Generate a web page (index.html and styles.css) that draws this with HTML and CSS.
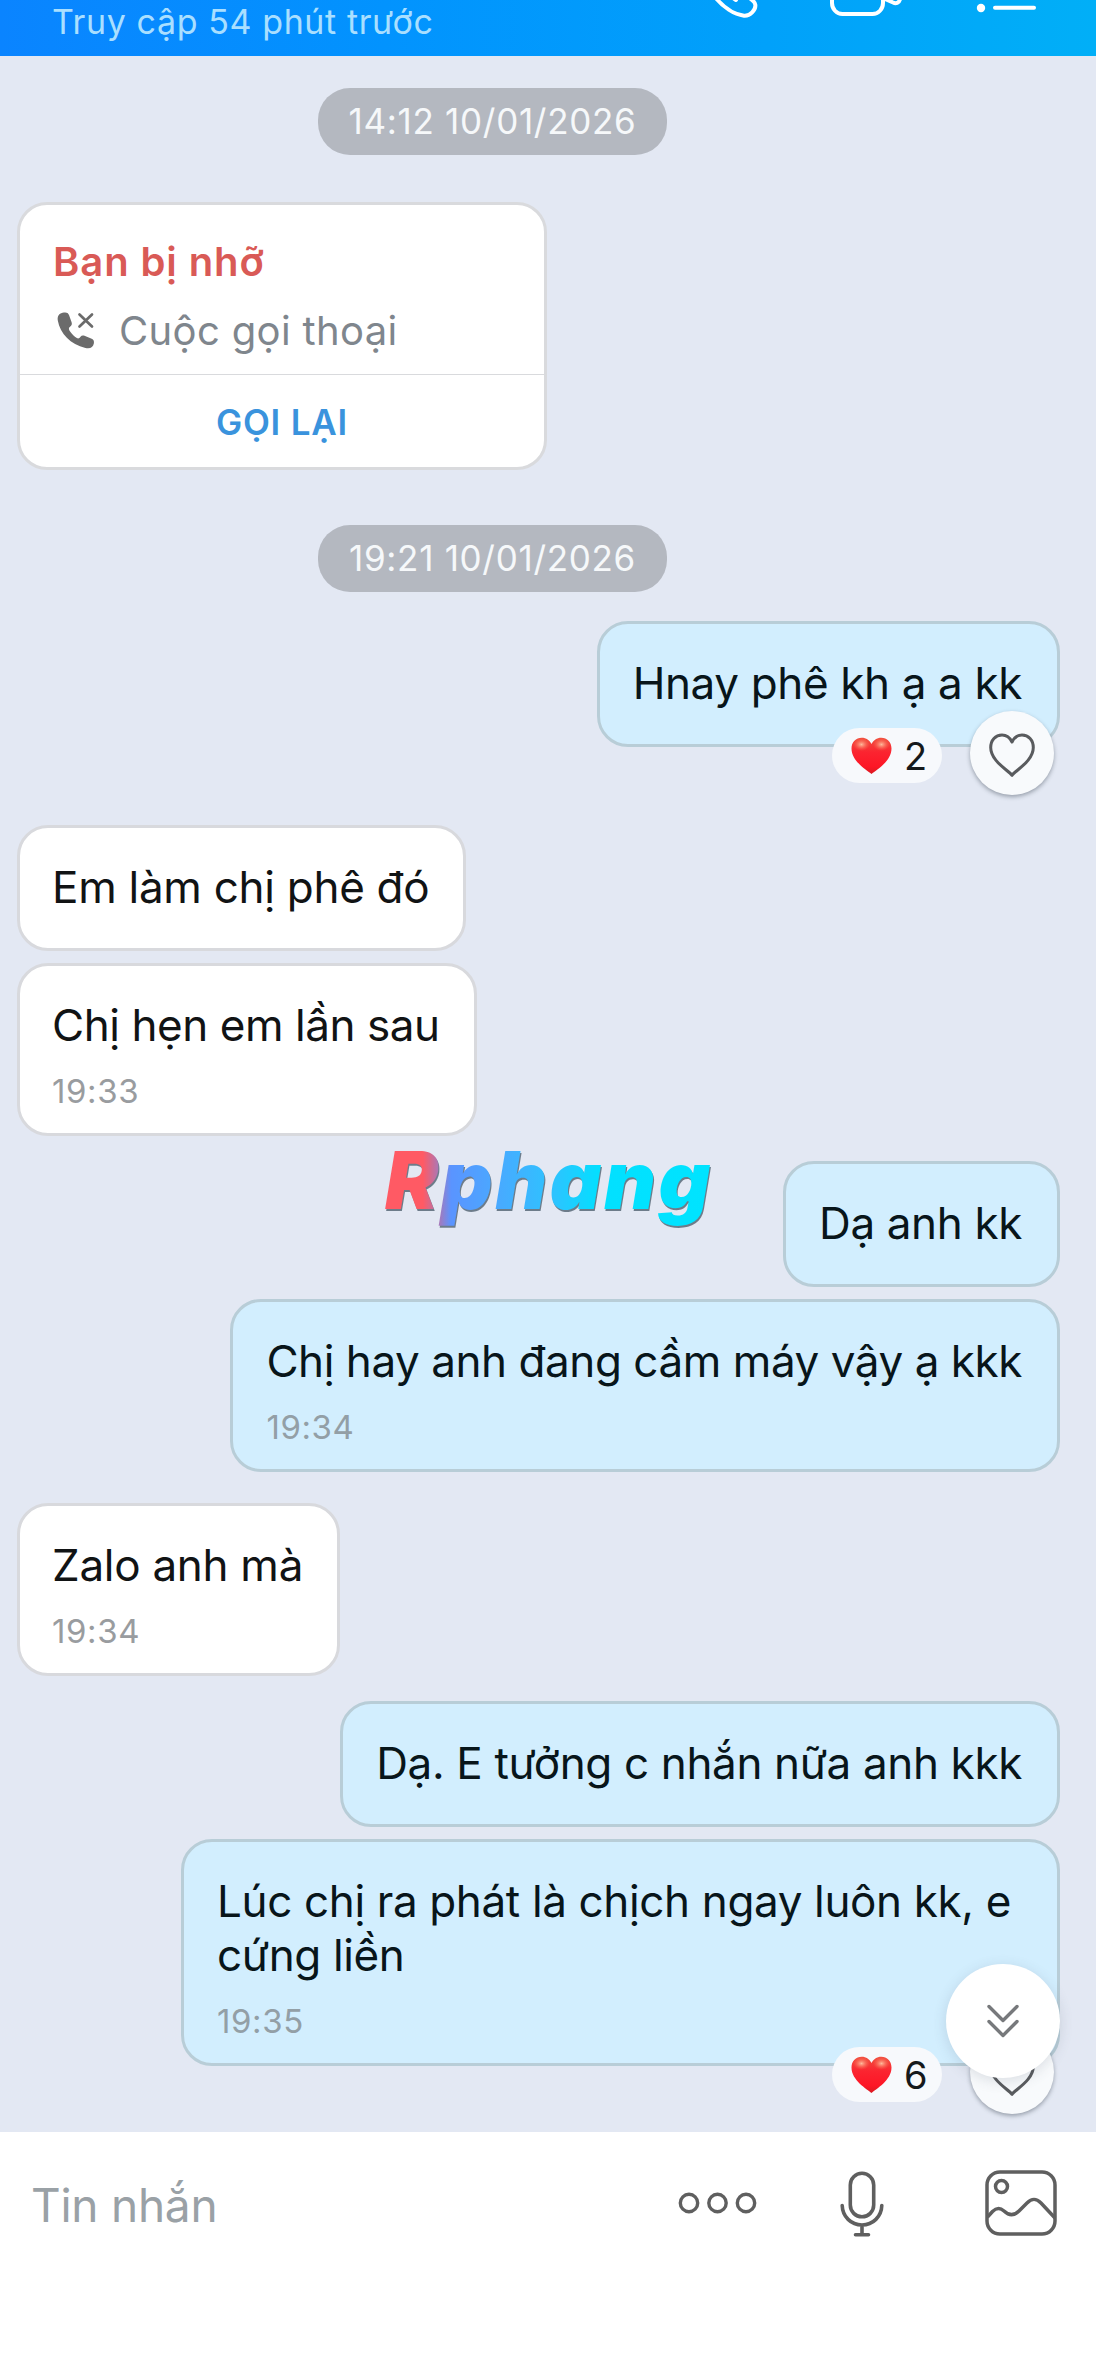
FILE: index.html
```html
<!DOCTYPE html>
<html lang="vi">
<head>
<meta charset="utf-8">
<title>Tin nhắn</title>
<link rel="stylesheet" href="styles.css">
</head>
<body>
<svg class="defs" width="0" height="0" aria-hidden="true">
  <defs>
    <radialGradient id="shine" cx="0.5" cy="0.5" r="0.5">
      <stop offset="0" stop-color="#ffc9a8" stop-opacity="0.9"/>
      <stop offset="1" stop-color="#ff6a50" stop-opacity="0"/>
    </radialGradient>
    <linearGradient id="red" x1="0" y1="0" x2="0" y2="1">
      <stop offset="0" stop-color="#f0503f"/>
      <stop offset="0.4" stop-color="#fb2430"/>
      <stop offset="0.8" stop-color="#fd1626"/>
      <stop offset="1" stop-color="#d81a20"/>
    </linearGradient>
    <symbol id="love" viewBox="0 0 41 38">
      <path d="M20.500 37C16 33 .5 24.500 .5 11.500.5 5 5 .8 10.700.8c4.500 0 8 2.600 9.800 6.200C22.300 3.400 25.800.8 30.300.8 36 .8 40.500 5 40.500 11.500 40.500 24.500 25 33 20.500 37Z" fill="url(#red)"/>
      <ellipse cx="10.500" cy="7.500" rx="8.500" ry="6.500" fill="url(#shine)"/>
      <ellipse cx="30.500" cy="7.500" rx="8.500" ry="6.500" fill="url(#shine)"/>
    </symbol>
    <symbol id="heart" viewBox="0 0 46 44">
      <path d="M23 42.300C19 37 1.700 28 1.700 14.500 1.700 7 6.500 2 13 2c4.500 0 8 2.800 10 7 2-4.200 5.500-7 10-7 6.500 0 11.300 5 11.300 12.500C44.300 28 27 37 23 42.300Z" fill="none" stroke="#595b5e" stroke-width="3" stroke-linejoin="round"/>
    </symbol>
  </defs>
</svg>

<div class="app">
  <header class="header">
    <span class="status">Truy cập 54 phút trước</span>
    <svg class="actions" width="336" height="20" viewBox="0 0 336 20" fill="none" stroke="#fff" stroke-width="4" stroke-linecap="round" stroke-linejoin="round">
      <path d="M5-3C13 7 24 14.500 34 15.700c6 .6 12-6 11.300-11C44.800 1 41-1 38-3M20-4l6 4"/>
      <path d="M122-6v9c0 6 4.500 11 10.500 11h30c6 0 10.500-5 10.500-11v-9M173-2l10 4.500c3 1.500 6 .5 7-3"/>
      <circle cx="271" cy="8" r="4.200" fill="#fff" stroke="none"/>
      <path d="M285 7.700h39"/>
    </svg>
  </header>

  <main class="chat">
    <time class="pill">14:12 10/01/2026</time>

    <section class="call">
      <div class="call-info">
        <div class="call-title">Bạn bị nhỡ</div>
        <div class="call-type">
          <svg width="38" height="38" viewBox="0 0 38 38">
            <path d="M5.500.8C9 0 11 .4 12 3l2.500 7c.7 2 .4 3.200-1.200 4.400-2 1.500-1.700 2.800 0 5.400 1.700 2.600 4 4.700 6.500 6.200 1.500.9 2.500.4 3.700-1.200 1-1.400 2.300-1.700 4-1l6.600 2.700c2.400 1 3.200 2.300 2.800 4.800-.8 4.200-3.800 5.800-8.500 4.700C13.500 32.500 3 21.500.8 8.500.2 4.500 1.700 1.700 5.500.8Z" fill="#6b6b6b"/>
            <path d="M22.500 2.500l12.500 12M35 2.500l-12.500 12" stroke="#6b6b6b" stroke-width="2.700" stroke-linecap="round"/>
          </svg>
          <span>Cuộc gọi thoại</span>
        </div>
      </div>
      <div class="call-back">GỌI LẠI</div>
    </section>

    <time class="pill pill-second">19:21 10/01/2026</time>

    <div class="msg sent gap-day">
      <p>Hnay phê kh ạ a kk</p>
      <div class="reactions">
        <span class="count"><svg width="41" height="38"><use href="#love"/></svg>2</span>
        <span class="like"><svg width="46" height="44"><use href="#heart"/></svg></span>
      </div>
    </div>

    <div class="msg received gap-reacted"><p>Em làm chị phê đó</p></div>
    <div class="msg received timed gap-same snug"><p>Chị hẹn em lần sau</p><time>19:33</time></div>

    <div class="msg sent gap-turn"><p>Dạ anh kk</p></div>
    <div class="msg sent timed gap-same snug"><p>Chị hay anh đang cầm máy vậy ạ kkk</p><time>19:34</time></div>

    <div class="msg received timed gap-wide"><p>Zalo anh mà</p><time>19:34</time></div>

    <div class="msg sent gap-turn"><p>Dạ. E tưởng c nhắn nữa anh kkk</p></div>
    <div class="msg sent timed gap-same long">
      <p>Lúc chị ra phát là chịch ngay luôn kk, e cứng liền</p><time>19:35</time>
      <div class="reactions">
        <span class="count"><svg width="41" height="38"><use href="#love"/></svg>6</span>
        <span class="like"><svg width="46" height="44"><use href="#heart"/></svg></span>
      </div>
    </div>

    <div class="watermark">Rphang</div>
    <div class="to-bottom">
      <svg width="34" height="36" viewBox="0 0 34 36" fill="none" stroke="#77797c" stroke-width="3.400" stroke-linecap="round" stroke-linejoin="round">
        <path d="M3 3.500l14 14 14-14M3 18.500l14 14 14-14"/>
      </svg>
    </div>
  </main>

  <footer class="composer">
    <span class="placeholder">Tin nhắn</span>
    <svg class="tool-more" width="80" height="22" viewBox="0 0 80 22" fill="none" stroke="#5f5f5f" stroke-width="3.400">
      <circle cx="11" cy="11" r="8.700"/><circle cx="39.500" cy="11" r="8.700"/><circle cx="68" cy="11" r="8.700"/>
    </svg>
    <svg class="tool-mic" width="44" height="66" viewBox="0 0 44 66" fill="none" stroke="#5f5f5f" stroke-width="3.600" stroke-linecap="round">
      <rect x="10.300" y="2.300" width="23.400" height="43.500" rx="11.700"/>
      <path d="M2.200 34.500C2.500 45.500 11 54 22 54s19.500-8.500 19.800-19.500M22 54v9.500M15.500 63.700h13"/>
    </svg>
    <svg class="tool-photo" width="72" height="66" viewBox="0 0 72 66" fill="none" stroke="#5f5f5f" stroke-width="3.500">
      <rect x="2" y="2" width="68" height="62" rx="13"/>
      <circle cx="16.500" cy="16.500" r="6"/>
      <path d="M2.500 47l5-5.500c4-4 8-3.700 11.500-.5 5 4.800 10 5 15 0L42 33c5-5 9-5 14 0l14 15"/>
    </svg>
  </footer>
</div>
</body>
</html>
```
FILE: styles.css
```css
* { box-sizing: border-box; }

body {
  margin: 0;
  background: #fff;
  font-family: Inter, "Noto Sans", sans-serif;
  color: #111314;
}

p { margin: 0; }
svg { display: block; flex: none; }
.defs { position: absolute; }

.app {
  display: flex;
  flex-direction: column;
  width: 1096px;
  height: 2376px;
  overflow: hidden;
}

.header {
  display: flex;
  align-items: flex-start;
  justify-content: space-between;
  height: 56px;
  padding: 2px 50px 0 52px;
  background: linear-gradient(90deg, #0a84ff 0%, #0293fe 35%, #01a1fa 70%, #01aff7 100%);
}
.status {
  font-size: 34px;
  line-height: 40px;
  letter-spacing: 0.6px;
  color: #a9dfff;
}
.actions {
  width: 336px;
  margin: -2px 0 0;
}

.chat {
  position: relative;
  display: flex;
  flex-direction: column;
  align-items: flex-start;
  height: 2076px;
  padding: 32px 36px 0 17px;
  background: #e3e8f3;
}

.pill {
  width: 349px;
  height: 67px;
  margin-left: 301px;
  border-radius: 32px;
  background: #b4b8c0;
  color: #f6f8fa;
  font-size: 35px;
  line-height: 67px;
  letter-spacing: 0.7px;
  text-align: center;
}
.pill-second { margin-top: 55px; }

.call {
  width: 530px;
  height: 268px;
  margin-top: 47px;
  border: 3px solid #d9dadd;
  border-radius: 30px;
  background: #fff;
}
.call-info {
  height: 170px;
  padding: 33px 33px 0;
  border-bottom: 1px solid #d9dadd;
}
.call-title {
  color: #d95a56;
  font-size: 40px;
  font-weight: 600;
  line-height: 48px;
  letter-spacing: 0.9px;
}
.call-type {
  display: flex;
  align-items: center;
  gap: 24px;
  margin-top: 21px;
  padding-left: 4px;
  color: #7f868d;
  font-size: 40px;
  line-height: 48px;
  letter-spacing: 0.35px;
}
.call-back {
  padding-top: 26px;
  color: #3a93dd;
  font-size: 35px;
  font-weight: 600;
  line-height: 42px;
  letter-spacing: 0.8px;
  text-align: center;
}

.msg {
  position: relative;
  padding: 32px 34px 34px 32px;
  border: 3px solid;
  border-radius: 31px;
  font-size: 44px;
  line-height: 54px;
  letter-spacing: -0.28px;
}
.received { background: #fff; border-color: #d8d9dd; }
.sent {
  align-self: flex-end;
  padding: 32px 35px 34px 33px;
  background: #d2eefe;
  border-color: #b8cdd7;
  color: #08151a;
  letter-spacing: -0.36px;
}
.timed { padding-bottom: 22px; }
.snug { letter-spacing: -0.44px; }
.long { width: 879px; }
.msg time {
  display: block;
  margin-top: 19px;
  color: #999c9f;
  font-size: 33px;
  line-height: 40px;
  letter-spacing: 0.6px;
}
.sent time { color: #939fa6; }

.gap-day { margin-top: 29px; }
.gap-same { margin-top: 12px; }
.gap-turn { margin-top: 25px; }
.gap-wide { margin-top: 31px; }
.gap-reacted { margin-top: 78px; }

/* Reaction count and like button straddle the bubble's lower edge */
.reactions {
  position: absolute;
  right: 3px;
  bottom: -51px;
  display: flex;
  align-items: center;
  gap: 28px;
}
.count {
  display: flex;
  align-items: center;
  gap: 12px;
  width: 110px;
  height: 55px;
  margin-top: 5px;
  padding-left: 19px;
  border-radius: 28px;
  background: #f7f9fc;
  color: #16191b;
  font-size: 38px;
  letter-spacing: 0;
}
.like {
  display: flex;
  align-items: center;
  justify-content: center;
  width: 84px;
  height: 84px;
  padding-top: 4px;
  border-radius: 50%;
  background: #f8fafc;
  box-shadow: 0 2px 4px rgba(60, 70, 85, 0.45);
}

.watermark {
  position: absolute;
  left: 385px;
  top: 1076px;
  padding-right: 8px;
  background: linear-gradient(90deg, #ff5a64 0, #ff5a64 38px, #a878b8 54px, #5a94ff 66px, #4aa8ff 110px, #2cc4ff 170px, #02e0ff 215px, #00e4ff 100%);
  -webkit-background-clip: text;
  background-clip: text;
  color: transparent;
  filter: drop-shadow(1px 2px 0 #6d7c8a);
  font-size: 80px;
  font-style: italic;
  font-weight: 900;
  line-height: 96px;
  letter-spacing: 2.6px;
}

.to-bottom {
  position: absolute;
  left: 946px;
  top: 1908px;
  display: flex;
  align-items: center;
  justify-content: center;
  width: 114px;
  height: 114px;
  border-radius: 50%;
  background: #fff;
  box-shadow: 0 3px 14px rgba(60, 75, 95, 0.16);
}

.composer {
  display: flex;
  align-items: flex-start;
  height: 244px;
  padding: 40px 39px 0 31px;
  background: #fff;
}
.placeholder {
  width: 647px;
  margin-top: 5px;
  color: #9aa1a6;
  font-size: 46px;
  line-height: 56px;
  letter-spacing: -0.25px;
}
.tool-more { margin-top: 20px; }
.tool-mic { margin-left: 82px; margin-top: -1px; }
.tool-photo { margin-left: 101px; margin-top: -2px; }
```
